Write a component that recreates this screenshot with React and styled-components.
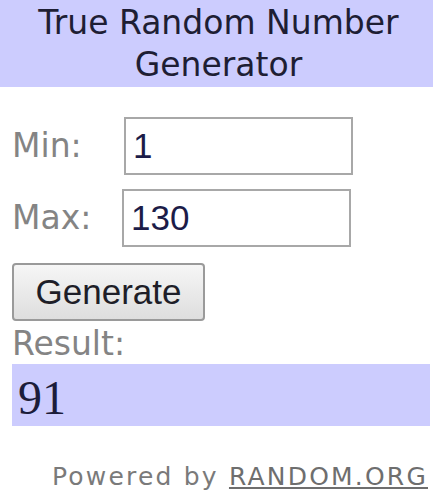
import React from "react";
import styled, { createGlobalStyle } from "styled-components";

const Global = createGlobalStyle`
  html, body { margin: 0; padding: 0; background: #ffffff; }
  body { width: 434px; height: 500px; overflow: hidden; }
`;

const Widget = styled.div`
  width: 434px;
  font-family: "DejaVu Sans", Verdana, sans-serif;
`;

const Header = styled.div`
  width: 433px;
  height: 87px;
  box-sizing: border-box;
  padding: 2px 0 0 4px;
  background: #ccccfe;
  color: #1e1e34;
  font-size: 33px;
  line-height: 42px;
  text-align: center;
`;

const Body = styled.div`
  padding: 30px 4px 0 12px;
  display: flex;
  flex-direction: column;
`;

const Row = styled.div`
  display: flex;
  align-items: center;
  margin-bottom: ${(p) => p.$gap}px;
`;

const Label = styled.label`
  width: ${(p) => p.$w}px;
  color: #848484;
  font-size: 33px;
  line-height: 38px;
`;

const Field = styled.div`
  box-sizing: border-box;
  width: 229px;
  height: 58px;
  border: 2px solid #a8a8a8;
  padding-left: 7px;
  display: flex;
  align-items: center;
  color: #1c1c48;
  font-family: "Liberation Sans", Arial, sans-serif;
  font-size: 35px;
`;

const Button = styled.button`
  align-self: flex-start;
  box-sizing: border-box;
  width: 193px;
  height: 58px;
  margin: 0;
  padding: 0;
  border: 2px solid #9a9a9a;
  border-radius: 4px;
  background: linear-gradient(#f6f6f6, #dedede);
  color: #1e1e28;
  font-family: "Liberation Sans", Arial, sans-serif;
  font-size: 35px;
  line-height: 54px;
`;

const ResultLabel = styled.div`
  color: #848484;
  font-size: 33px;
  line-height: 38px;
  margin-top: 4px;
  margin-bottom: 1px;
`;

const ResultBox = styled.div`
  box-sizing: border-box;
  height: 62px;
  background: #ccccfe;
  padding: 6px 0 0 6px;
  color: #1c1c3a;
  font-family: "Liberation Serif", "Times New Roman", serif;
  font-size: 48px;
  line-height: 56px;
`;

const Footer = styled.div`
  text-align: right;
  padding-right: 2px;
  margin-top: 36px;
  color: #7a7a7a;
  font-size: 25px;
  line-height: 30px;
  letter-spacing: 2.2px;
`;

const Link = styled.a`
  color: #6e6e6e;
  text-decoration: underline;
`;

export default function App() {
  return (
    <>
      <Global />
      <Widget>
        <Header>True Random Number Generator</Header>
        <Body>
          <Row $gap={14}>
            <Label $w={112}>Min:</Label>
            <Field>1</Field>
          </Row>
          <Row $gap={16}>
            <Label $w={110}>Max:</Label>
            <Field>130</Field>
          </Row>
          <Button>Generate</Button>
          <ResultLabel>Result:</ResultLabel>
          <ResultBox>91</ResultBox>
          <Footer>
            Powered by <Link href="#">RANDOM.ORG</Link>
          </Footer>
        </Body>
      </Widget>
    </>
  );
}
